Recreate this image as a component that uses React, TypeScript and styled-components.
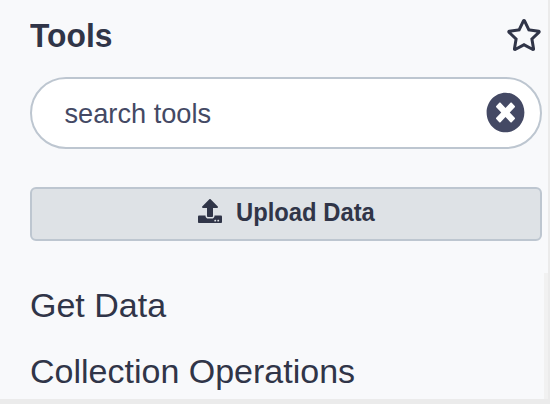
import React from 'react';
import styled, { createGlobalStyle } from 'styled-components';
import { FaRegStar, FaTimesCircle, FaUpload } from 'react-icons/fa';

const GlobalStyle = createGlobalStyle`
  * { box-sizing: border-box; }
  body { margin: 0; background: #ebebeb; }
`;

const Frame = styled.div`
  display: flex;
  width: 550px;
  height: 404px;
  padding: 0 2px 5px 0;
  background: #ebebeb;
  font-family: 'Liberation Sans', Arial, sans-serif;
  color: #303548;
  overflow: hidden;
`;

const Panel = styled.aside`
  display: flex;
  flex-direction: column;
  width: 548px;
  height: 399px;
  background: #f8f9fb;
`;

const Header = styled.header`
  display: flex;
  justify-content: space-between;
  height: 77px;
  padding: 16px 6px 0 30px;
`;

const Title = styled.h2`
  margin: 0;
  font-size: 34px;
  line-height: 38px;
  font-weight: 700;
  transform: scaleX(0.935);
  transform-origin: left;
`;

const IconButton = styled.button<{ $width: number; $height: number }>`
  display: flex;
  flex: none;
  width: ${({ $width }) => $width}px;
  height: ${({ $height }) => $height}px;
  padding: 0;
  border: 0;
  background: none;
  color: inherit;
  svg { width: 100%; height: 100%; }
`;

const SearchBox = styled.div`
  display: flex;
  align-items: center;
  justify-content: space-between;
  height: 72px;
  margin: 0 6px 0 30px;
  padding: 0 15.5px 1px 32.5px;
  border: 2px solid #bdc6d0;
  border-radius: 36px;
  background: #fff;
  color: #444964;
`;

const SearchText = styled.span`
  padding-top: 2px;
  font-size: 27.2px;
  line-height: 30px;
`;

const UploadButton = styled.button`
  display: flex;
  align-items: center;
  justify-content: center;
  gap: 14px;
  height: 54px;
  margin: 38px 6px 0 30px;
  padding: 0 0 4px;
  border: 2px solid #bdc6d0;
  border-radius: 6px;
  background: #dee2e6;
  color: #303548;
  font-family: inherit;
  svg { width: 24px; height: 24px; margin-bottom: 2px; }
`;

const UploadLabel = styled.span`
  width: 139px;
  font-size: 26px;
  line-height: 30px;
  font-weight: 700;
  text-align: left;
  white-space: nowrap;
  transform: scaleX(0.915);
  transform-origin: left;
`;

const Sections = styled.nav`
  display: flex;
  flex-direction: column;
  gap: 28px;
  height: 126px;
  margin-top: 32px;
  padding: 13px 0 0 30px;
  border-right: 4px solid #f1f1f1;
`;

const SectionLink = styled.a`
  font-size: 34px;
  line-height: 38px;
  white-space: nowrap;
`;

export default function App() {
  return (
    <>
      <GlobalStyle />
      <Frame>
        <Panel>
          <Header>
            <Title>Tools</Title>
            <IconButton $width={36} $height={38} aria-label="Favorites"><FaRegStar /></IconButton>
          </Header>
          <SearchBox>
            <SearchText>search tools</SearchText>
            <IconButton $width={39} $height={41} aria-label="Clear search">
              <FaTimesCircle preserveAspectRatio="none" />
            </IconButton>
          </SearchBox>
          <UploadButton>
            <FaUpload />
            <UploadLabel>Upload Data</UploadLabel>
          </UploadButton>
          <Sections>
            <SectionLink>Get Data</SectionLink>
            <SectionLink>Collection Operations</SectionLink>
          </Sections>
        </Panel>
      </Frame>
    </>
  );
}
